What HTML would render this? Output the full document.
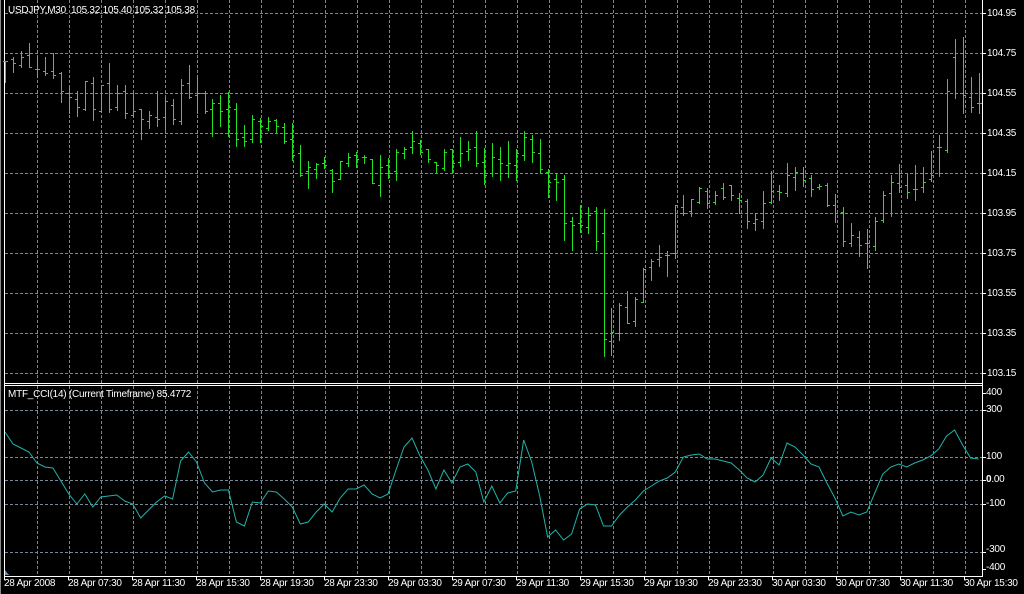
<!DOCTYPE html>
<html><head><meta charset="utf-8">
<style>
html,body{margin:0;padding:0;background:#000;width:1024px;height:594px;overflow:hidden}
svg{position:absolute;left:0;top:0}
.t{position:absolute;color:#fff;font:10px "Liberation Sans",sans-serif;white-space:pre;line-height:12px;letter-spacing:-0.25px}
</style></head><body>
<svg id="s" width="1024" height="594" xmlns="http://www.w3.org/2000/svg" shape-rendering="crispEdges"></svg>
<div class="t" style="left:8px;top:5px">USDJPY,M30  105.32 105.40 105.32 105.38</div>
<div class="t" style="left:8px;top:389px">MTF_CCI(14) (Current Timeframe) 85.4772</div>
<div class="t" style="left:987px;top:8px">104.95</div>
<div class="t" style="left:987px;top:48px">104.75</div>
<div class="t" style="left:987px;top:88px">104.55</div>
<div class="t" style="left:987px;top:128px">104.35</div>
<div class="t" style="left:987px;top:168px">104.15</div>
<div class="t" style="left:987px;top:208px">103.95</div>
<div class="t" style="left:987px;top:248px">103.75</div>
<div class="t" style="left:987px;top:288px">103.55</div>
<div class="t" style="left:987px;top:328px">103.35</div>
<div class="t" style="left:987px;top:368px">103.15</div>
<div class="t" style="left:986px;top:387px">400</div>
<div class="t" style="left:986px;top:404px">300</div>
<div class="t" style="left:986px;top:451px">100</div>
<div class="t" style="left:986px;top:474px"><b>0</b>.00</div>
<div class="t" style="left:986px;top:498px">-100</div>
<div class="t" style="left:986px;top:544px">-300</div>
<div class="t" style="left:986px;top:562px">-400</div>
<div class="t" style="left:4px;top:578px">28 Apr 2008</div>
<div class="t" style="left:68px;top:578px">28 Apr 07:30</div>
<div class="t" style="left:132px;top:578px">28 Apr 11:30</div>
<div class="t" style="left:196px;top:578px">28 Apr 15:30</div>
<div class="t" style="left:260px;top:578px">28 Apr 19:30</div>
<div class="t" style="left:324px;top:578px">28 Apr 23:30</div>
<div class="t" style="left:388px;top:578px">29 Apr 03:30</div>
<div class="t" style="left:452px;top:578px">29 Apr 07:30</div>
<div class="t" style="left:516px;top:578px">29 Apr 11:30</div>
<div class="t" style="left:580px;top:578px">29 Apr 15:30</div>
<div class="t" style="left:644px;top:578px">29 Apr 19:30</div>
<div class="t" style="left:708px;top:578px">29 Apr 23:30</div>
<div class="t" style="left:772px;top:578px">30 Apr 03:30</div>
<div class="t" style="left:836px;top:578px">30 Apr 07:30</div>
<div class="t" style="left:900px;top:578px">30 Apr 11:30</div>
<div class="t" style="left:964px;top:578px">30 Apr 15:30</div>
<script>
var s=document.getElementById('s'),h='';
var G='stroke="#778899" stroke-width="1" stroke-dasharray="3,2"';
for(var x=37;x<982;x+=32){h+='<line x1="'+(x+.5)+'" y1="0" x2="'+(x+.5)+'" y2="383" '+G+'/>';h+='<line x1="'+(x+.5)+'" y1="386" x2="'+(x+.5)+'" y2="576" '+G+'/>';}
for(var y=13;y<=373;y+=40){h+='<line x1="5" y1="'+(y+.5)+'" x2="982" y2="'+(y+.5)+'" '+G+'/>';h+='<line x1="982" y1="'+(y+.5)+'" x2="986" y2="'+(y+.5)+'" stroke="#fff"/>';}
[410,457,480,504,552].forEach(function(y){h+='<line x1="5" y1="'+(y+.5)+'" x2="982" y2="'+(y+.5)+'" '+G+'/>';});
[393,410,457,480,504,552,569].forEach(function(y){h+='<line x1="982" y1="'+(y+.5)+'" x2="986" y2="'+(y+.5)+'" stroke="#fff"/>';});
for(var x=4;x<982;x+=64){h+='<line x1="'+(x+.5)+'" y1="576" x2="'+(x+.5)+'" y2="580" stroke="#fff"/>';}
h+='<line x1="4.5" y1="0" x2="4.5" y2="577" stroke="#fff"/>';
h+='<line x1="982.5" y1="0" x2="982.5" y2="577" stroke="#fff"/>';
h+='<line x1="4" y1="383.5" x2="983" y2="383.5" stroke="#fff"/>';
h+='<line x1="4" y1="385.5" x2="983" y2="385.5" stroke="#fff"/>';
h+='<line x1="4" y1="576.5" x2="983" y2="576.5" stroke="#fff"/>';
h+='<line x1="0.5" y1="0" x2="0.5" y2="594" stroke="#888"/>';
var B=[[61,82,61,61],[57,72,59,63],[51,67,65,57],[43,67,55,67],[57,77,69,69],[57,75,71,73],[53,78,71,75],[72,102,73,91],[86,113,93,97],[91,116,99,107],[81,110,109,81],[77,120,83,109],[85,112,111,85],[63,112,83,109],[85,110,107,93],[85,118,91,113],[93,116,115,111],[109,139,109,119],[111,128,121,115],[91,126,117,119],[97,129,117,101],[99,124,105,119],[79,124,121,85],[65,98,83,97],[77,113,95,93],[91,113,93,111],[99,136,109,103],[95,126,103,111],[92,136,109,107],[103,146,109,139],[125,146,137,141],[115,142,139,119],[118,142,121,126],[117,130,128,121],[119,132,120,126],[123,143,127,141],[123,160,139,155],[145,176,153,175],[161,188,171,167],[163,178,169,164],[157,168,163,165],[169,192,170,181],
[161,179,179,161],[153,166,163,157],[152,167,155,159],[155,163,157,157],[159,183,159,183],[155,196,185,167],[158,178,165,173],[149,180,171,152],[147,158,153,149],[131,153,147,141],[140,154,143,152],[149,162,149,159],[162,172,162,165],[149,170,168,152],[149,172,149,163],[137,166,162,153],[141,160,151,149],[131,166,147,163],[148,184,162,175],[143,176,173,157],[147,180,159,163],[141,177,165,163],[149,180,165,153],[131,160,155,137],[135,162,139,152],[139,173,153,169],[169,197,172,182],[173,200,179,182],[175,240,179,223],[217,250,221,225],[205,232,223,225],[207,233,227,215],[207,250,211,241],[209,356,233,339],[308,355,341,332],[303,340,333,305],[291,323,307,323],[297,326,321,299],[268,302,302,269],[259,280,267,261],[245,266,259,257],[251,276,255,255],[205,258,253,205],[195,215,207,213],[199,216,211,199],[187,203,202,188],[188,208,191,203],[191,204,202,195],[183,199,188,197],[185,200,185,195],[193,213,198,200],[199,228,201,221],[213,230,223,219],[191,228,221,203],[171,203,202,191],[185,200,191,192],[163,196,193,175],[167,190,177,172],[167,186,173,180],[175,196,178,189],[184,189,187,186],[183,206,185,205],[194,222,205,213],[207,246,212,241],[223,246,243,235],[231,256,237,245],[229,268,243,243],[217,250,246,221],[191,222,220,195],[175,216,193,182],[164,192,183,187],[173,198,185,192],[165,200,189,189],[167,192,187,182],[151,181,179,175],[135,176,147,147],[79,152,150,91],[39,98,57,93],[37,113,93,95],[77,112,97,107],[73,113,103,103]];
var p='';
B.forEach(function(b,i){var x=Math.round(5+7.98*i)+.5;p+='M'+x+' '+b[0]+'V'+(b[1]+1)+'M'+(x-2.5)+' '+(b[2]+.5)+'H'+x+'M'+x+' '+(b[3]+.5)+'H'+(x+2.5);});
h+='<path d="'+p+'" stroke="#22e022" stroke-width="1" fill="none"/>';
var C=[432,444,448,452,463,467,468,481,494,504,494,507,497,496,495,501,504,518,510,502,496,499,461,452,462,483,492,490,490,522,526,502,503,491,492,499,507,524,522,512,504,512,498,489,489,485,494,498,494,470,447,438,456,470,489,470,483,467,464,472,502,486,503,493,491,440,462,496,537,530,540,534,509,504,505,526,526,515,507,500,491,486,481,478,472,457,455,454,459,459,461,463,470,478,482,475,458,465,443,447,455,464,467,483,498,516,512,515,512,493,474,467,464,467,463,460,456,449,436,430,445,458,459];
var q='';C.forEach(function(y,i){q+=(i?'L':'M')+(5+7.98*i).toFixed(1)+' '+y;});
h+='<path d="'+q+'" stroke="#20b2aa" stroke-width="1" fill="none" shape-rendering="auto"/>';
h+='<path d="M5 570L9 575H5Z" fill="#778899"/>';
s.innerHTML=h;
</script>
</body></html>
